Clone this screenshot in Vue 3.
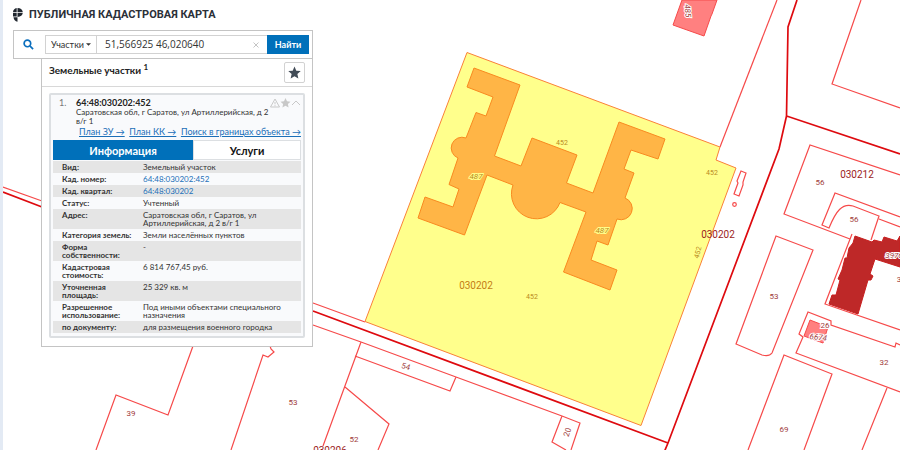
<script setup>
import { ref } from 'vue'

const query = ref('51,566925 46,020640')
const kind = ref('Участки')
const tab = ref('info')

const rows = [
  { label: 'Вид:', value: 'Земельный участок' },
  { label: 'Кад. номер:', value: '64:48:030202:452', link: true },
  { label: 'Кад. квартал:', value: '64:48:030202', link: true },
  { label: 'Статус:', value: 'Учтенный' },
  { label: 'Адрес:', value: 'Саратовская обл, г Саратов, ул Артиллерийская, д 2 в/г 1' },
  { label: 'Категория земель:', value: 'Земли населённых пунктов' },
  { label: 'Форма собственности:', value: '-' },
  { label: 'Кадастровая стоимость:', value: '6 814 767,45 руб.' },
  { label: 'Уточненная площадь:', value: '25 329 кв. м' },
  { label: 'Разрешенное использование:', value: 'Под иными объектами специального назначения' },
  { label: 'по документу:', value: 'для размещения военного городка' }
]
</script>

<template>
  <div class="app">
    <svg class="map" viewBox="0 0 900 450" preserveAspectRatio="xMinYMin slice" role="img" aria-label="Кадастровая карта">
      <g class="parcel">
        <path d="M777 0L720 147" />
        <path d="M861 0L832 84L900 108" />
        <path d="M900 175L810 145L784 214L850 239" />
        <path d="M900 217L835 193L822 225L829 228C836 211 842 203 853 206L879 216L871 240M879 219L900 227" />
        <path d="M852 234L825 304L900 330" />
        <path d="M776 236L813 250L772 353Q769 357 762 355L736 344Z" />
        <path d="M900 345L896 343L895 347L831 325V321L808 312L799 334L803 337L796 353L900 392" />
        <path d="M748 450L784 355L832 374L804 450M887 388L862 450" />
        <path d="M741 171L746 173L743 182V185L739 196L734 194L738 183L737 181Z" />
        <circle cx="734.5" cy="204.500" r="1.800" />
        <path d="M3 187L42 201" />
        <path d="M313 303L365 322M313 325L361 342L456 377L562 416L580 423L571 450M361 342L323 446M355 356L450 391L456 377M345 387L389 424L378 450M562 416L552 442L566 450" />
        <path d="M193 346L168 415L116 395L96 450M270 346L271 349L274 352L268 357L263 355L231 450" />
      </g>
      <g class="quarter">
        <path d="M797 0L788 27L786.500 116L900 154M786.500 116L779 149L668 443L660 462" />
        <path d="M3 192L42 207M313 311L668 443" />
      </g>
      <path class="site" d="M467 52.500L720 147L716 160L736 168L641 425.500L365 321.500Z" />
      <path class="site-building" d="M474 68L520 85L494.500 156L521 166L532 138L577 155L566.500 183L593 193L619 122L665 139L658 159L631 150L624 169L634 173L625 198A10.500 10.500 0 1 1 617 219L608 245L597 241L591 260L617 270L610 290L563.500 272L586 212L560 202.500A25 25 0 1 1 513 185L487 175L464.500 235L418 218L425 197L453 207L459 189L449 184.500L458 158A10.500 10.500 0 1 1 466 138L476 112.500L486 116L493 97L467 87Z" />
      <path class="building" d="M682 0L673 25L704 36L711 16L712 14L717 0Z" />
      <path class="building" d="M810 320L828 327L823 343L804 336Z" />
      <path class="building-dark" d="M855 236L872 242L874 240L882 242L884 237L897 241L900 236V267L875 259L870 274L873 276L871 280L868 280L858 314L829 304L832 295L836 295L840 280L838 279L842 270L845 258L847 258L849 248L853 243Z" />

      <g class="num">
        <text x="820" y="185">56</text>
        <text x="854" y="222">56</text>
        <text x="774" y="299">53</text>
        <text x="884" y="365">32</text>
        <text x="784" y="432">69</text>
        <text x="293" y="405">53</text>
        <text x="131" y="416">39</text>
        <text x="354" y="442">52</text>
        <text x="899" y="282">3</text>
        <text transform="translate(405 369) rotate(17)">54</text>
        <text transform="translate(570 433) rotate(-72)">20</text>
      </g>
      <g class="num onsite">
        <text x="562" y="145">452</text>
        <text x="532" y="299">452</text>
        <text x="712" y="175">452</text>
        <text transform="translate(700 253) rotate(-75)">452</text>
      </g>
      <g class="num halo">
        <text class="soft" x="476" y="179">487</text>
        <text class="soft" x="602" y="233">487</text>
        <text x="825" y="328">26</text>
        <text class="slant" transform="translate(818 340) rotate(6)">6674</text>
        <text class="slant" x="894" y="258">3976</text>
        <text class="slant" transform="translate(685 11) rotate(85)">485</text>
      </g>
      <g class="code">
        <text x="857" y="178">030212</text>
        <text x="718" y="238">030202</text>
        <text x="330" y="454">030206</text>
        <text class="onsite" x="476" y="289">030202</text>
      </g>
    </svg>

    <main class="overlay">
      <header class="brand">
        <svg class="logo" viewBox="0 0 10 14" aria-hidden="true">
          <path d="M3.700 0V4H0Q.3 .8 3.700 0ZM4.500 0Q9 0 9.800 4H4.500ZM0 4.700H3.700V8.500H0ZM4.500 4.700H9.800Q9.400 8.400 4.500 8.900ZM.5 9.200H4.500V13.700Q1 13 .5 9.200Z" />
        </svg>
        <h1>ПУБЛИЧНАЯ КАДАСТРОВАЯ КАРТА</h1>
      </header>

      <form class="search" role="search" @submit.prevent>
        <svg class="lens" viewBox="0 0 12 12" aria-hidden="true">
          <circle cx="4.800" cy="4.800" r="3.600" />
          <path d="M7.500 7.500L11 11" />
        </svg>
        <div class="kind">
          <select v-model="kind" aria-label="Тип объекта">
            <option>Участки</option>
          </select>
          <svg viewBox="0 0 6 3" aria-hidden="true"><path d="M0 0H6L3 3Z" /></svg>
        </div>
        <div class="field">
          <input v-model="query" type="text" aria-label="Поиск">
          <button class="clear" type="button" aria-label="Очистить" @click="query = ''">
            <svg viewBox="0 0 6 6" aria-hidden="true"><path d="M.5 .5L5.500 5.500M5.500 .5L.5 5.500" /></svg>
          </button>
        </div>
        <button class="find" type="submit">Найти</button>
      </form>

      <section class="panel">
        <div class="panel-head">
          <h2>Земельные участки <sup>1</sup></h2>
          <button class="fav" type="button" aria-label="Избранное">
            <svg viewBox="0 0 24 24" aria-hidden="true"><path d="M12 1L15.300 8.600L23.500 9.400L17.300 14.900L19.100 23L12 18.700L4.900 23L6.700 14.900L.5 9.400L8.700 8.600Z" /></svg>
          </button>
        </div>

        <article class="card">
          <div class="card-head">
            <span class="index">1.</span>
            <div class="object">
              <h3>64:48:030202:452</h3>
              <p>Саратовская обл, г Саратов, ул Артиллерийская, д 2<br>в/г 1</p>
            </div>
            <svg class="marks" viewBox="0 0 31 10" aria-hidden="true">
              <path class="line" d="M5 1L9.500 9H.5ZM5 4V6.300M5 7.200V8.200" />
              <path class="fill" d="M15.500 0L17 3.300L20.500 3.700L17.900 6L18.600 9.600L15.500 7.800L12.400 9.600L13.100 6L10.500 3.700L14 3.300Z" />
              <path class="line" d="M22 7L26 3L30 7" />
            </svg>
          </div>
          <nav class="links">
            <a href="#plan-zu">План ЗУ →</a>
            <a href="#plan-kk">План КК →</a>
            <a href="#bounds">Поиск в границах объекта →</a>
          </nav>
          <div class="tabs">
            <button type="button" :class="{ active: tab === 'info' }" @click="tab = 'info'">Информация</button>
            <button type="button" :class="{ active: tab === 'services' }" @click="tab = 'services'">Услуги</button>
          </div>
          <table v-if="tab === 'info'">
            <tbody>
              <tr v-for="row in rows" :key="row.label">
                <th scope="row">{{ row.label }}</th>
                <td><a v-if="row.link" href="#object">{{ row.value }}</a><template v-else>{{ row.value }}</template></td>
              </tr>
            </tbody>
          </table>
        </article>
      </section>
    </main>
  </div>
</template>

<style>
body {
  background: #fff;
}
</style>

<style scoped>
.app {
  box-sizing: border-box;
  display: grid;
  height: 100vh;
  overflow: hidden;
  border-left: 3px solid #e3eaf4;
  font-family: Lato, "Open Sans", sans-serif;
  color: #333;
}
.app *,
.app *::before {
  box-sizing: border-box;
}
.map,
.overlay {
  grid-area: 1 / 1;
}
.map {
  width: 100vw;
  height: 100vh;
  margin-left: -3px;
  clip-path: inset(0 0 0 3px);
  font-family: Roboto, sans-serif;
}
.parcel {
  fill: none;
  stroke: #f64a4a;
  stroke-width: 1.2;
}
.quarter {
  fill: none;
  stroke: #de0a0f;
  stroke-width: 1.7;
}
.site {
  fill: #ffff8c;
  stroke: #fa8038;
}
.site-building {
  fill: #ffb546;
  stroke: #f98a20;
}
.building {
  fill: #ff8080;
  stroke: #f64a4a;
}
.building-dark {
  fill: #be2828;
  stroke: #c81e1e;
}
.num {
  fill: #a03c3c;
  font-size: 8px;
  text-anchor: middle;
}
.code {
  fill: #9b1c1c;
  font-size: 10px;
  text-anchor: middle;
}
.num.onsite {
  fill: #b98a20;
  font-size: 7px;
}
.code .onsite {
  fill: #c47d14;
}
.halo text {
  paint-order: stroke;
  stroke: #fff;
  stroke-width: 2;
}
.halo .soft {
  fill: #b98a20;
  stroke: #ffff8c;
  font-style: italic;
}
.halo .slant {
  font-style: italic;
}
.overlay {
  z-index: 1;
  width: 300px;
  margin-left: 10px;
}
.brand {
  display: flex;
  align-items: center;
  gap: 6px;
  height: 30px;
}
.logo {
  width: 10px;
  height: 14px;
  fill: #20262e;
}
h1,
h2,
h3,
p {
  margin: 0;
}
h1 {
  font-family: Roboto, sans-serif;
  font-size: 11px;
  line-height: 16px;
  color: #2b3038;
  white-space: nowrap;
}
.search {
  display: flex;
  align-items: center;
  height: 29px;
  padding: 0 3px 0 9px;
  background: #fff;
  border: 1px solid #c4c4c4;
}
.lens {
  width: 11px;
  height: 11px;
  margin-right: 11px;
  fill: none;
  stroke: #0a6ebd;
  stroke-width: 1.8;
}
.kind,
.field {
  display: flex;
  align-items: center;
  height: 19px;
  border: 1px solid #d2d2d2;
  border-right: 0;
}
.kind {
  width: 51px;
  padding: 0 5px;
}
.kind svg {
  flex: none;
  width: 5px;
  height: 3px;
  fill: #333;
}
select,
input {
  min-width: 0;
  flex: 1;
  height: 17px;
  padding: 0;
  border: 0;
  outline: 0;
  background: none;
  font-family: inherit;
  font-size: 9px;
  line-height: 17px;
  color: #333;
  appearance: none;
}
.field {
  flex: 1;
  min-width: 0;
  padding: 0 8px;
}
input {
  font-family: "Open Sans", sans-serif;
  font-size: 10px;
}
button {
  padding: 0;
  border: 0;
  background: none;
  font-family: inherit;
}
.clear {
  display: flex;
}
.clear svg {
  width: 6px;
  height: 6px;
  stroke: #c4c4c4;
  fill: none;
}
.find {
  width: 42px;
  height: 19px;
  background: #0070ba;
  color: #fff;
  font-size: 9px;
  font-weight: 700;
}
.panel {
  margin-left: 28px;
  padding-bottom: 8px;
  background: #fff;
  border: 1px solid #c4c4c4;
  border-top: 0;
}
.panel-head {
  display: flex;
  justify-content: space-between;
  height: 28px;
  padding: 3px 7px 0;
  border-bottom: 1px solid #d8d8d8;
}
h2 {
  font-size: 10px;
  line-height: 16px;
  color: #222;
}
sup {
  font-size: 8px;
  line-height: 1px;
}
.fav {
  display: grid;
  place-items: center;
  width: 21px;
  height: 21px;
  border: 1px solid #d2d2d2;
  border-radius: 2px;
  background: #fff;
}
.fav svg {
  width: 13px;
  height: 13px;
  fill: #414b56;
}
.card {
  margin: 6px 7px 0;
  padding: 3px 2px;
  border: 2px solid #dcdfe2;
  border-radius: 2px;
  background: #f9fafc;
}
.card-head {
  display: flex;
  align-items: flex-start;
  padding-left: 6px;
}
.index {
  width: 17px;
  font-size: 9px;
  line-height: 10px;
  color: #777;
}
.object {
  flex: 1;
  min-width: 0;
}
h3 {
  font-size: 9px;
  line-height: 10px;
  color: #222;
}
.object p {
  font-size: 8px;
  line-height: 9px;
  white-space: nowrap;
}
.marks {
  flex: none;
  width: 31px;
  height: 10px;
  margin-left: -31px;
}
.marks .line {
  fill: none;
  stroke: #c8c8c8;
}
.marks .fill {
  fill: #c8c8c8;
}
a {
  color: #1b6fb8;
}
.links {
  display: flex;
  justify-content: space-between;
  height: 14px;
  padding: 0 0 0 26px;
  font-size: 9px;
  line-height: 12px;
  white-space: nowrap;
}
.tabs {
  display: grid;
  grid-template-columns: 140px 1fr;
  height: 20px;
  margin-bottom: 1px;
}
.tabs button {
  border: 1px solid #dcdfe2;
  background: #fff;
  font-size: 11px;
  font-weight: 700;
  color: #111;
}
.tabs .active {
  border-color: #0070ba;
  background: #0070ba;
  color: #fff;
}
table {
  width: 100%;
  border-collapse: collapse;
  font-size: 8px;
  line-height: 8px;
}
tr:nth-child(odd) {
  background: #e5e5e5;
}
th,
td {
  padding: 2px 0;
  text-align: left;
  vertical-align: top;
}
th {
  width: 90px;
  padding: 2px 8px 2px 9px;
}
td {
  padding-right: 20px;
}
td a {
  text-decoration: none;
}
</style>
